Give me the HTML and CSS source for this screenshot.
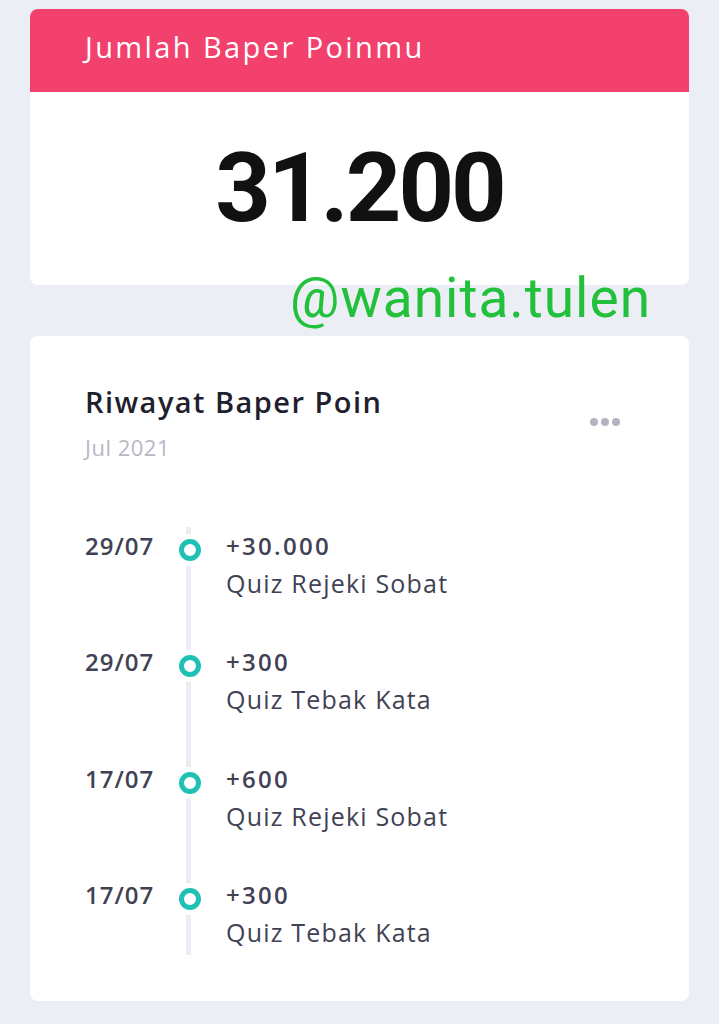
FILE: index.html
```html
<!DOCTYPE html>
<html>
<head>
<meta charset="utf-8">
<link rel="stylesheet" href="styles.css">
</head>
<body>
<div class="page">
  <section class="card points">
    <div class="points-head">Jumlah Baper Poinmu</div>
    <div class="points-value">31.200</div>
  </section>
  <section class="card history">
    <div class="history-head">
      <div>
        <div class="history-title">Riwayat Baper Poin</div>
        <div class="history-sub">Jul 2021</div>
      </div>
      <div class="more"><span></span><span></span><span></span></div>
    </div>
    <div class="timeline">
      <div class="item">
        <div class="date">29/07</div>
        <div class="badge"><i></i></div>
        <div class="content"><div class="amount">+30.000</div><div class="desc">Quiz Rejeki Sobat</div></div>
      </div>
      <div class="item">
        <div class="date">29/07</div>
        <div class="badge"><i></i></div>
        <div class="content"><div class="amount">+300</div><div class="desc">Quiz Tebak Kata</div></div>
      </div>
      <div class="item">
        <div class="date">17/07</div>
        <div class="badge"><i></i></div>
        <div class="content"><div class="amount">+600</div><div class="desc">Quiz Rejeki Sobat</div></div>
      </div>
      <div class="item">
        <div class="date">17/07</div>
        <div class="badge"><i></i></div>
        <div class="content"><div class="amount">+300</div><div class="desc">Quiz Tebak Kata</div></div>
      </div>
    </div>
  </section>
  <div class="watermark">@wanita.tulen</div>
</div>
</body>
</html>
```

FILE: styles.css
```css
* { box-sizing: border-box; }
html, body { margin: 0; padding: 0; }
body {
  background: #eceef5;
  font-family: "Open Sans", "Noto Sans", sans-serif;
  width: 719px;
  height: 1024px;
  overflow: hidden;
}
.page {
  position: relative;
  padding: 9px 30px 0 30px;
  display: flex;
  flex-direction: column;
  gap: 51px;
}
.card {
  background: #fff;
  border-radius: 8px;
  overflow: hidden;
}
.points { height: 276px; }
.points-head {
  background: #f3416d;
  color: #fff;
  height: 83px;
  padding: 23px 0 0 55px;
  font-size: 29px;
  line-height: 1;
  font-weight: 500;
  letter-spacing: 2.4px;
}
.points-value {
  text-align: center;
  font-family: "Roboto", sans-serif;
  font-weight: 700;
  font-size: 97px;
  line-height: 1;
  color: #111;
  padding-top: 48px;
  letter-spacing: -3px;
}
.history {
  height: 665px;
  padding: 51px 0 0 55px;
}
.history-head {
  display: flex;
  justify-content: space-between;
  align-items: flex-start;
  padding-right: 69px;
}
.history-title {
  font-size: 29px;
  line-height: 1;
  font-weight: 600;
  color: #1f1f2e;
  letter-spacing: 1.45px;
}
.history-sub {
  margin-top: 20px;
  font-size: 22px;
  line-height: 1;
  color: #b8b8c4;
  letter-spacing: 0.5px;
}
.more {
  display: flex;
  gap: 3px;
  margin-top: 31px;
}
.more span {
  width: 8px;
  height: 8px;
  border-radius: 50%;
  background: #b4b4c1;
}
.timeline {
  position: relative;
  margin-top: 76px;
}
.timeline::before {
  content: "";
  position: absolute;
  left: 101px;
  top: -7px;
  width: 5px;
  height: 428px;
  background: #ebedf3;
}
.item {
  display: flex;
  align-items: flex-start;
  height: 116.3px;
}
.date {
  width: 94px;
  font-size: 24px;
  line-height: 1;
  font-weight: 600;
  color: #3f4254;
  letter-spacing: 1px;
}
.badge {
  width: 47px;
  padding-top: 5px;
  position: relative;
  z-index: 1;
  display: flex;
}
.badge i {
  display: block;
  width: 22px;
  height: 22px;
  border: 5px solid #1fc1b4;
  border-radius: 50%;
  background: #fff;
  box-shadow: 0 0 0 5px #fff;
}
.content { color: #3f4254; }
.amount {
  font-size: 24px;
  line-height: 1;
  font-weight: 600;
  letter-spacing: 2.3px;
}
.desc {
  margin-top: 13px;
  font-size: 25px;
  line-height: 1;
  font-weight: 500;
  letter-spacing: 1.2px;
}
.watermark {
  position: absolute;
  left: 290px;
  top: 271px;
  font-family: "Roboto", sans-serif;
  font-size: 55px;
  line-height: 1;
  color: #23c03b;
  letter-spacing: 1px;
}
```
